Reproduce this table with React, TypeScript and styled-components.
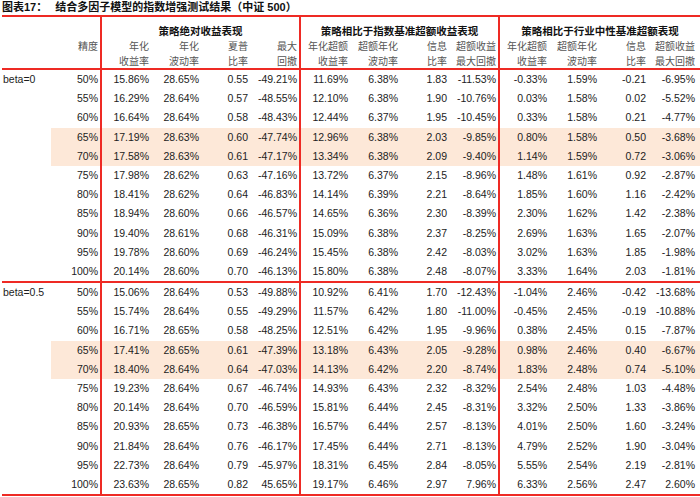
import React from 'react';
import styled, { createGlobalStyle } from 'styled-components';

const RED = '#ee2a24';
const HL = '#fde8d8';
const COLS = '49px 49px 51px 50px 49px 49px 51px 50px 49px 49px 51px 50px 49px 52px';
const EDGES = [2, 6, 10];
const ROW_H = 19.2;

const Global = createGlobalStyle`
  html, body { margin: 0; padding: 0; background: #fff; overflow: hidden; }
  body { font-family: "Liberation Sans", "Noto Sans CJK SC", sans-serif; color: #1c1c1c; }
`;

const Page = styled.div`
  width: 700px;
  height: 497px;
`;

const Title = styled.div`
  height: 15px;
  line-height: 15px;
  padding-left: 2px;
  font-family: "Liberation Sans", "Noto Sans CJK SC", sans-serif;
  font-size: 11px;
  font-weight: 700;
  color: #111;
  white-space: nowrap;
`;

const TitleGap = styled.span`
  display: inline-block;
  width: 8px;
`;

const Table = styled.div`
  margin-left: 2px;
  width: 698px;
  border-top: 2px solid ${RED};
  border-bottom: 2px solid ${RED};
`;

const Header = styled.div`
  display: grid;
  grid-template-columns: ${COLS};
  grid-template-rows: 21px 30px;
  border-bottom: 2px solid ${RED};
`;

const GroupTitle = styled.div<{ $start: number }>`
  grid-row: 1;
  grid-column: ${(p) => p.$start} / span 4;
  border-left: 2px solid ${RED};
  text-align: center;
  font-family: "Noto Sans CJK SC", sans-serif;
  font-weight: 700;
  font-size: 10.5px;
  line-height: 15px;
  padding-top: 6px;
  color: #111;
  white-space: nowrap;
`;

const SubHead = styled.div<{ $edge?: boolean; $pad: number }>`
  grid-row: 2;
  text-align: right;
  padding-right: ${(p) => p.$pad}px;
  font-family: "Noto Sans CJK SC", sans-serif;
  font-size: 10px;
  line-height: 15px;
  color: #555;
  border-left: ${(p) => (p.$edge ? `2px solid ${RED}` : 'none')};
  white-space: nowrap;
`;

const Block = styled.div<{ $sep?: boolean }>`
  border-top: ${(p) => (p.$sep ? `2px solid ${RED}` : 'none')};
`;

const Row = styled.div`
  display: grid;
  grid-template-columns: ${COLS};
  height: ${ROW_H}px;
`;

const Label = styled.div`
  padding-left: 1px;
  font-size: 10.5px;
  line-height: ${ROW_H}px;
  white-space: nowrap;
`;

const Cell = styled.div<{ $hl?: boolean; $edge?: boolean; $pad: number }>`
  background: ${(p) => (p.$hl ? HL : 'transparent')};
  border-left: ${(p) => (p.$edge ? `2px solid ${RED}` : 'none')};
  text-align: right;
  padding-right: ${(p) => p.$pad}px;
  font-size: 10.5px;
  line-height: ${ROW_H}px;
  white-space: nowrap;
`;

const subHeads: [string, string][] = [
  ['年化', '收益率'], ['年化', '波动率'], ['夏普', '比率'], ['最大', '回撤'],
  ['年化超额', '收益率'], ['超额年化', '波动率'], ['信息', '比率'], ['超额收益', '最大回撤'],
  ['年化超额', '收益率'], ['超额年化', '波动率'], ['信息', '比率'], ['超额收益', '最大回撤'],
];

type Group = { label: string; rows: string[][] };

const groups: Group[] = [
  {
    label: 'beta=0',
    rows: [
      ['50%', '15.86%', '28.65%', '0.55', '-49.21%', '11.69%', '6.38%', '1.83', '-11.53%', '-0.33%', '1.59%', '-0.21', '-6.95%'],
      ['55%', '16.29%', '28.64%', '0.57', '-48.55%', '12.10%', '6.38%', '1.90', '-10.76%', '0.03%', '1.58%', '0.02', '-5.52%'],
      ['60%', '16.64%', '28.64%', '0.58', '-48.43%', '12.44%', '6.37%', '1.95', '-10.45%', '0.33%', '1.58%', '0.21', '-4.77%'],
      ['65%', '17.19%', '28.63%', '0.60', '-47.74%', '12.96%', '6.38%', '2.03', '-9.85%', '0.80%', '1.58%', '0.50', '-3.68%'],
      ['70%', '17.58%', '28.63%', '0.61', '-47.17%', '13.34%', '6.38%', '2.09', '-9.40%', '1.14%', '1.59%', '0.72', '-3.06%'],
      ['75%', '17.98%', '28.62%', '0.63', '-47.16%', '13.72%', '6.37%', '2.15', '-8.96%', '1.48%', '1.61%', '0.92', '-2.87%'],
      ['80%', '18.41%', '28.62%', '0.64', '-46.83%', '14.14%', '6.39%', '2.21', '-8.64%', '1.85%', '1.60%', '1.16', '-2.42%'],
      ['85%', '18.94%', '28.60%', '0.66', '-46.57%', '14.65%', '6.36%', '2.30', '-8.39%', '2.30%', '1.62%', '1.42', '-2.38%'],
      ['90%', '19.40%', '28.61%', '0.68', '-46.31%', '15.09%', '6.38%', '2.37', '-8.25%', '2.69%', '1.63%', '1.65', '-2.07%'],
      ['95%', '19.78%', '28.60%', '0.69', '-46.24%', '15.45%', '6.38%', '2.42', '-8.03%', '3.02%', '1.63%', '1.85', '-1.98%'],
      ['100%', '20.14%', '28.60%', '0.70', '-46.13%', '15.80%', '6.38%', '2.48', '-8.07%', '3.33%', '1.64%', '2.03', '-1.81%'],
    ],
  },
  {
    label: 'beta=0.5',
    rows: [
      ['50%', '15.06%', '28.64%', '0.53', '-49.88%', '10.92%', '6.41%', '1.70', '-12.43%', '-1.04%', '2.46%', '-0.42', '-13.68%'],
      ['55%', '15.74%', '28.64%', '0.55', '-49.29%', '11.57%', '6.42%', '1.80', '-11.00%', '-0.45%', '2.45%', '-0.19', '-10.88%'],
      ['60%', '16.71%', '28.65%', '0.58', '-48.25%', '12.51%', '6.42%', '1.95', '-9.96%', '0.38%', '2.45%', '0.15', '-7.87%'],
      ['65%', '17.41%', '28.65%', '0.61', '-47.39%', '13.18%', '6.43%', '2.05', '-9.28%', '0.98%', '2.46%', '0.40', '-6.67%'],
      ['70%', '18.40%', '28.64%', '0.64', '-47.03%', '14.13%', '6.42%', '2.20', '-8.74%', '1.83%', '2.48%', '0.74', '-5.10%'],
      ['75%', '19.23%', '28.64%', '0.67', '-46.74%', '14.93%', '6.43%', '2.32', '-8.32%', '2.54%', '2.48%', '1.03', '-4.48%'],
      ['80%', '20.14%', '28.64%', '0.70', '-46.59%', '15.81%', '6.44%', '2.45', '-8.31%', '3.32%', '2.50%', '1.33', '-3.86%'],
      ['85%', '20.93%', '28.65%', '0.73', '-46.38%', '16.57%', '6.44%', '2.57', '-8.13%', '4.01%', '2.50%', '1.60', '-3.24%'],
      ['90%', '21.84%', '28.64%', '0.76', '-46.17%', '17.45%', '6.44%', '2.71', '-8.13%', '4.79%', '2.52%', '1.90', '-3.04%'],
      ['95%', '22.73%', '28.64%', '0.79', '-45.97%', '18.31%', '6.45%', '2.84', '-8.05%', '5.55%', '2.54%', '2.19', '-2.81%'],
      ['100%', '23.63%', '28.65%', '0.82', '45.65%', '19.17%', '6.46%', '2.97', '7.96%', '6.33%', '2.56%', '2.47', '2.60%'],
    ],
  },
];

const HIGHLIGHT = new Set(['65%', '70%']);
const padFor = (col: number) => (col === 13 ? 5 : 2);

export default function App() {
  return (
    <Page>
      <Global />
      <Title>
        图表17：<TitleGap />结合多因子模型的指数增强测试结果（中证 500）
      </Title>
      <Table>
        <Header>
          <GroupTitle $start={3}>策略绝对收益表现</GroupTitle>
          <GroupTitle $start={7}>策略相比于指数基准超额收益表现</GroupTitle>
          <GroupTitle $start={11}>策略相比于行业中性基准超额表现</GroupTitle>
          <SubHead $pad={2} style={{ gridColumn: 1 }} />
          <SubHead $pad={2} style={{ gridColumn: 2 }}>精度</SubHead>
          {subHeads.map(([a, b], i) => (
            <SubHead key={i} $pad={padFor(i + 2)} $edge={EDGES.includes(i + 2)}>
              {a}
              <br />
              {b}
            </SubHead>
          ))}
        </Header>
        {groups.map((g, gi) => (
          <Block key={g.label} $sep={gi > 0}>
            {g.rows.map((r, ri) => {
              const hl = HIGHLIGHT.has(r[0]);
              return (
                <Row key={ri}>
                  <Label>{ri === 0 ? g.label : ''}</Label>
                  {r.map((v, ci) => (
                    <Cell
                      key={ci}
                      $hl={hl}
                      $edge={EDGES.includes(ci + 1)}
                      $pad={padFor(ci + 1)}
                    >
                      {v}
                    </Cell>
                  ))}
                </Row>
              );
            })}
          </Block>
        ))}
      </Table>
    </Page>
  );
}
